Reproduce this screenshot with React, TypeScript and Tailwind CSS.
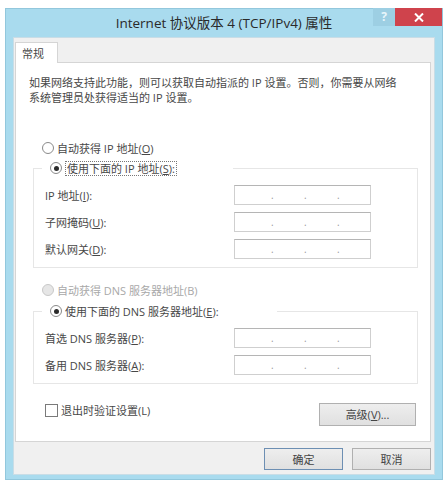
import React from 'react';

const font = "font-['Open_Sans','Noto_Sans_CJK_SC',sans-serif]";

function Radio({ checked, disabled }: { checked?: boolean; disabled?: boolean }) {
  return (
    <span
      className={`flex h-[12px] w-[12px] shrink-0 items-center justify-center rounded-full border ${
        disabled ? 'border-[#c8c8c8] bg-[#e6e6e6]' : 'border-[#8a8a8a] bg-white'
      }`}
    >
      {checked && <span className="h-[5px] w-[5px] rounded-full bg-[#2b2b2b]" />}
    </span>
  );
}

function IpField() {
  return (
    <div className="flex h-[20px] w-[137px] items-center border border-[#cfcfcf] border-t-[#b5b5b5] bg-white text-[10px] leading-none text-[#9a9a9a]">
      <span className="w-[36px]" />
      <span className="w-[33px]">.</span>
      <span className="w-[33px]">.</span>
      <span>.</span>
    </div>
  );
}

function FieldRow({ label, mn, tail }: { label: string; mn: string; tail: string }) {
  return (
    <div className="flex h-[20px] items-center">
      <span className="w-[189px]">
        {label}(<span className="underline">{mn}</span>){tail}
      </span>
      <IpField />
    </div>
  );
}

function Button({ children, primary, className = '' }: { children: React.ReactNode; primary?: boolean; className?: string }) {
  return (
    <button
      className={`flex items-center justify-center border bg-gradient-to-b from-[#eeeeee] to-[#e0e0e0] text-[11px] text-[#444] ${
        primary ? 'border-[#6d8fb3]' : 'border-[#b0b0b0]'
      } ${className}`}
    >
      {children}
    </button>
  );
}

export default function App() {
  return (
    <div className={`h-[481px] w-[443px] bg-white pl-[5px] pt-[8px] ${font}`}>
      <div className="flex h-[472px] w-[438px] flex-col border border-[#92c7dc] bg-[#a9dbee]">
        {/* title bar */}
        <div className="relative flex h-[28px] shrink-0 items-center justify-center">
          <span className="text-[13.5px] text-[#2a2a2a]">Internet 协议版本 4 (TCP/IPv4) 属性</span>
          <div className="absolute right-0 top-[-1px] flex h-[18px]">
            <div className="flex w-[22px] items-center justify-center bg-[#9dcfe3] text-[12px] font-bold text-[#e8f6fb]">?</div>
            <div className="flex w-[47px] items-center justify-center bg-[#cf434c] text-white">
              <svg width="10" height="9" viewBox="0 0 10 9">
                <path d="M1 0.5 L9 8.5 M9 0.5 L1 8.5" stroke="#fff" strokeWidth="2" />
              </svg>
            </div>
          </div>
        </div>

        {/* client area */}
        <div className="mx-[7px] flex h-[438px] flex-col border border-[#c9dde6] bg-[#f0f0f0] pl-[1px] pr-[3px] pt-[4px] text-[11px] leading-[15px] text-[#474747]">
          <div className="relative z-10 -mb-px flex h-[21px] w-[43px] items-center border border-b-0 border-[#d5d5d5] bg-white pl-[6px]">
            常规
          </div>
          <div className="flex h-[380px] flex-col border border-[#d5d5d5] bg-white px-[13px] pt-[12px]">
            <p>
              如果网络支持此功能，则可以获取自动指派的 IP 设置。否则，你需要从网络
              <br />
              系统管理员处获得适当的 IP 设置。
            </p>

            <div className="ml-[13px] mt-[35px] flex h-[16px] items-center gap-[3px]">
              <Radio />
              <span>
                自动获得 IP 地址(<span className="underline">O</span>)
              </span>
            </div>

            <fieldset className="-mr-[1px] ml-[4px] mt-[4px] border border-[#e6e6e6] pb-[8px] pl-[11px]">
              <legend className="-ml-[3px] flex h-[16px] w-[191px] items-center gap-[3px] bg-white pl-[8px]">
                <Radio checked />
                <span className="border border-dotted border-[#777] px-[1px] leading-[13px]">
                  使用下面的 IP 地址(<span className="underline">S</span>):
                </span>
              </legend>
              <div className="mt-[9px] flex flex-col gap-[7px]">
                <FieldRow label="IP 地址" mn="I" tail=":" />
                <FieldRow label="子网掩码" mn="U" tail=":" />
                <FieldRow label="默认网关" mn="D" tail=":" />
              </div>
            </fieldset>

            <div className="ml-[13px] mt-[14px] flex h-[16px] items-center gap-[3px] text-[#a8a8a8]">
              <Radio disabled />
              <span>自动获得 DNS 服务器地址(B)</span>
            </div>

            <fieldset className="-mr-[1px] ml-[4px] mt-[5px] border border-[#e6e6e6] pb-[8px] pl-[11px]">
              <legend className="-ml-[3px] flex h-[16px] w-[235px] items-center gap-[3px] bg-white pl-[8px]">
                <Radio checked />
                <span>
                  使用下面的 DNS 服务器地址(<span className="underline">E</span>):
                </span>
              </legend>
              <div className="mt-[9px] flex flex-col gap-[7px]">
                <FieldRow label="首选 DNS 服务器" mn="P" tail=":" />
                <FieldRow label="备用 DNS 服务器" mn="A" tail=":" />
              </div>
            </fieldset>

            <div className="mt-[19px] flex items-start justify-between pl-[16px] pr-[1px]">
              <div className="flex items-center gap-[3px]">
                <span className="h-[13px] w-[13px] border border-[#7a7a7a] bg-white" />
                <span>退出时验证设置(L)</span>
              </div>
              <Button className="h-[23px] w-[97px]">
                高级(<span className="underline">V</span>)...
              </Button>
            </div>
          </div>

          <div className="mt-[6px] flex justify-end gap-[9px]">
            <Button primary className="h-[22px] w-[79px]">
              确定
            </Button>
            <Button className="h-[22px] w-[79px]">取消</Button>
          </div>
        </div>
      </div>
    </div>
  );
}
